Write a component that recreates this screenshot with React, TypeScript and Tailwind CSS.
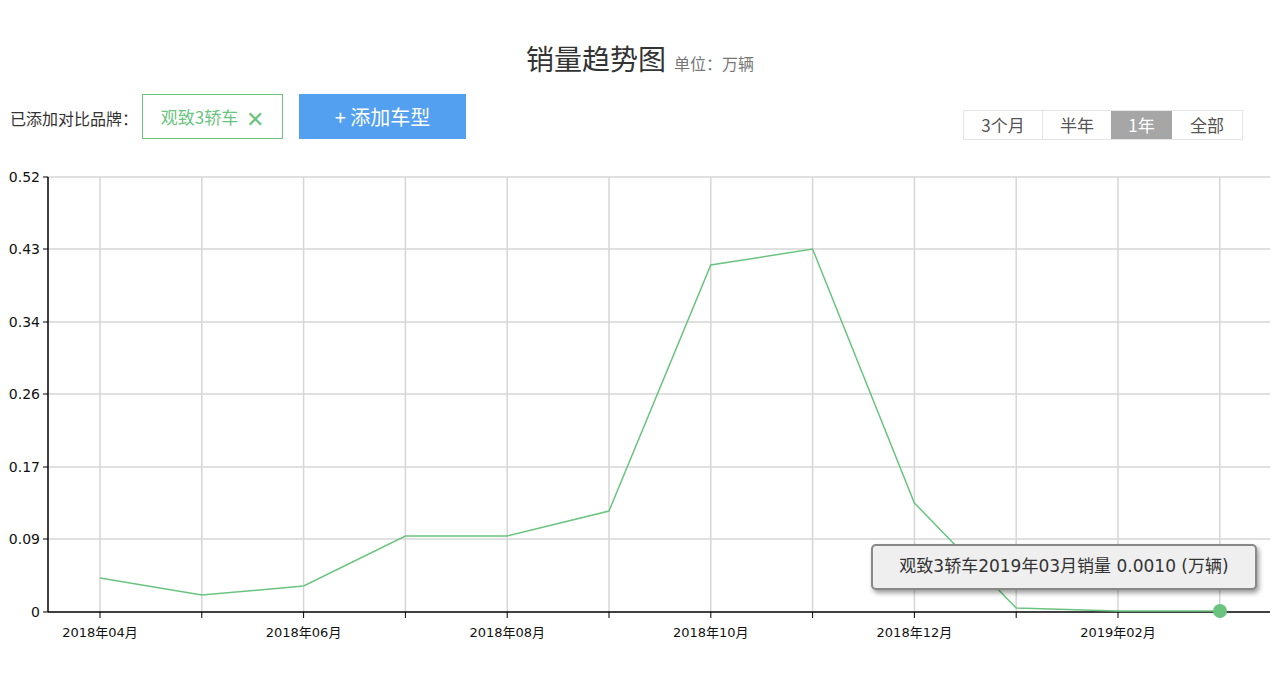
import React from "react";

const F = '"Noto Sans CJK SC", "Noto Sans", sans-serif';
const ys = [578, 595, 586, 536, 536, 511, 265, 249, 503, 608, 611, 611];
const xs = ys.map((_, i) => 100 + i * 101.8);
const grid = [177, 249, 322, 394, 467, 539];
const yl = ["0.52", "0.43", "0.34", "0.26", "0.17", "0.09"];
const xl = ["2018年04月", "2018年06月", "2018年08月", "2018年10月", "2018年12月", "2019年02月"];
const OFF = 160;

export default function App() {
  return (
    <div className="relative w-[1280px] h-[675px] bg-white overflow-hidden" style={{ fontFamily: F }}>
      <div className="h-[90px] flex items-end justify-center pb-[18px] pt-[28px]">
        <span className="text-[28px] leading-none text-[#333]">销量趋势图</span>
        <span className="text-[16px] leading-none text-[#777] ml-[8px] mb-[1px]">单位：万辆</span>
      </div>
      <div className="flex items-start h-[70px] pt-[4px]">
        <span className="ml-[10px] mt-[12px] text-[16px] text-[#333]">已添加对比品牌：</span>
        <div className="ml-[4px] w-[141px] h-[45px] border border-[#6ac47f] flex items-center justify-center gap-[8px] text-[17px] text-[#6ac47f]">
          观致3轿车<span className="text-[22px] leading-none">✕</span>
        </div>
        <div className="ml-[16px] w-[167px] h-[45px] bg-[#539ff0] flex items-center justify-center text-white text-[20px]">+ 添加车型</div>
        <div className="ml-auto mr-[37px] mt-[16px] flex border border-[#e5e5e5] text-[17px] text-[#555] h-[30px]">
          <div className="w-[79px] flex items-center justify-center border-r border-[#e5e5e5]">3个月</div>
          <div className="w-[68px] flex items-center justify-center">半年</div>
          <div className="w-[61px] flex items-center justify-center bg-[#a6a6a6] text-white">1年</div>
          <div className="w-[70px] flex items-center justify-center">全部</div>
        </div>
      </div>
      <svg width="1280" height="515" className="block">
        <g transform={`translate(0,-${OFF})`}>
          {grid.map((y) => <line key={y} x1={48} x2={1270} y1={y} y2={y} stroke="#d6d6d6" strokeWidth="1.5" />)}
          {xs.map((x) => <line key={x} x1={x} x2={x} y1={177} y2={612} stroke="#d6d6d6" strokeWidth="1.5" />)}
          {grid.map((y, i) => (
            <g key={i}>
              <line x1={43} x2={48} y1={y} y2={y} stroke="#000" />
              <text x={40} y={y + 5} textAnchor="end" fontSize="14" fill="#111" fontFamily='"DejaVu Sans", sans-serif'>{yl[i]}</text>
            </g>
          ))}
          <line x1={43} x2={48} y1={612} y2={612} stroke="#000" />
          <text x={40} y={617} textAnchor="end" fontSize="14" fill="#111" fontFamily='"DejaVu Sans", sans-serif'>0</text>
          <line x1={48} x2={48} y1={177} y2={612} stroke="#000" strokeWidth="1.5" />
          <line x1={48} x2={1270} y1={612} y2={612} stroke="#000" strokeWidth="1.5" />
          {xs.map((x) => <line key={"t" + x} x1={x} x2={x} y1={612} y2={618} stroke="#000" />)}
          {xl.map((l, i) => (
            <text key={l} x={xs[i * 2]} y={637} textAnchor="middle" fontSize="13" fill="#111" fontFamily='"DejaVu Sans", "Noto Sans CJK SC", sans-serif'>{l}</text>
          ))}
          <polyline points={xs.map((x, i) => `${x},${ys[i]}`).join(" ")} fill="none" stroke="#6ac47f" strokeWidth="1.5" />
          <circle cx={1220} cy={611} r={7} fill="#6ac47f" />
        </g>
      </svg>
      <div className="absolute left-[871px] top-[544px] w-[386px] h-[46px] rounded-[5px] border-2 border-[#888] bg-[#efefef] shadow-[2px_3px_5px_rgba(0,0,0,0.4)] flex items-center justify-center text-[17px] text-[#333]" style={{ fontFamily: '"DejaVu Sans", "Noto Sans CJK SC", sans-serif' }}>
        观致3轿车2019年03月销量 0.0010 (万辆)
      </div>
    </div>
  );
}
